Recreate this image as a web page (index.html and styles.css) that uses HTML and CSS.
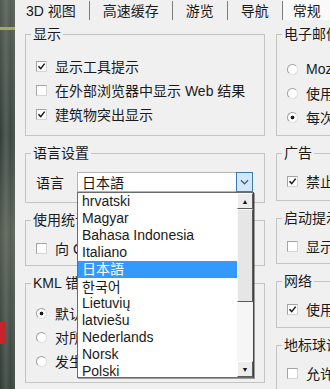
FILE: index.html
```html
<!DOCTYPE html>
<html lang="zh-CN">
  <head>
    <meta charset="UTF-8" />
    <title>选项</title>
    <link rel="stylesheet" href="styles.css">
  </head>
  <body>
    <div class="screen">
      <div class="map"></div>
      <div class="dialog">
        <div class="tabs">
          <div class="tab">3D 视图</div>
          <div class="tab">高速缓存</div>
          <div class="tab">游览</div>
          <div class="tab">导航</div>
          <div class="tab active">常规</div>
        </div>

        <div class="panel">
          <div class="col">
            <fieldset class="group g-display">
              <legend>显示</legend>
              <label class="row"><span class="check"><svg viewBox="0 0 9 9"><path d="M1.5 4.2l2.2 2.4 4-5" /></svg></span>显示工具提示</label>
              <label class="row"><span class="check"></span>在外部浏览器中显示 Web 结果</label>
              <label class="row"><span class="check"><svg viewBox="0 0 9 9"><path d="M1.5 4.2l2.2 2.4 4-5" /></svg></span>建筑物突出显示</label>
            </fieldset>

            <fieldset class="group g-lang">
              <legend>语言设置</legend>
              <div class="row lang-row">
                <span>语言</span>
                <div class="select">
                  <span class="select-value">日本語</span>
                  <span class="select-btn">
                    <svg viewBox="0 0 10 6"><path d="M1 1l4 4 4-4" /></svg>
                  </span>
                  <div class="dropdown">
                    <ul class="options">
                      <li>hrvatski</li>
                      <li>Magyar</li>
                      <li>Bahasa Indonesia</li>
                      <li>Italiano</li>
                      <li class="selected">日本語</li>
                      <li lang="ko">한국어</li>
                      <li>Lietuvių</li>
                      <li>latviešu</li>
                      <li>Nederlands</li>
                      <li>Norsk</li>
                      <li>Polski</li>
                    </ul>
                    <div class="scrollbar">
                      <span class="sb-btn">&#9650;</span>
                      <span class="sb-thumb"></span>
                      <span class="sb-track"></span>
                      <span class="sb-btn">&#9660;</span>
                    </div>
                  </div>
                </div>
              </div>
            </fieldset>

            <fieldset class="group g-stats">
              <legend>使用统计信息</legend>
              <label class="row"><span class="check"></span>向 Google 发送使用统计信息</label>
            </fieldset>

            <fieldset class="group g-kml">
              <legend>KML 错误处理</legend>
              <label class="row"><span class="radio on"></span>默认行为</label>
              <label class="row"><span class="radio"></span>对所有错误静默处理</label>
              <label class="row"><span class="radio"></span>发生错误时提示</label>
            </fieldset>
          </div>

          <div class="col">
            <fieldset class="group g-mail">
              <legend>电子邮件程序</legend>
              <label class="row"><span class="radio"></span>Mozilla Thunderbird</label>
              <label class="row"><span class="radio"></span>使用 Gmail 帐户</label>
              <label class="row"><span class="radio on"></span>每次询问</label>
            </fieldset>

            <fieldset class="group g-ads">
              <legend>广告</legend>
              <label class="row"><span class="check"><svg viewBox="0 0 9 9"><path d="M1.5 4.2l2.2 2.4 4-5" /></svg></span>禁止广告</label>
            </fieldset>

            <fieldset class="group">
              <legend>启动提示</legend>
              <label class="row"><span class="check"></span>显示启动提示</label>
            </fieldset>

            <fieldset class="group g-net">
              <legend>网络</legend>
              <label class="row"><span class="check"><svg viewBox="0 0 9 9"><path d="M1.5 4.2l2.2 2.4 4-5" /></svg></span>使用代理服务器</label>
            </fieldset>

            <fieldset class="group">
              <legend>地标球设置</legend>
              <label class="row"><span class="check"></span>允许访问地标球</label>
            </fieldset>
          </div>
        </div>
      </div>
    </div>
  </body>
</html>
```

FILE: styles.css
```css
* {
  box-sizing: border-box;
}
body {
  margin: 0;
  width: 330px;
  height: 389px;
  overflow: hidden;
  font-family: "Liberation Sans", "Noto Sans CJK SC", sans-serif;
  font-size: 14px;
  color: #1a1a1a;
  background: #f0f0f0;
}
.screen {
  display: flex;
  height: 389px;
}

/* strip of the map window behind the dialog */
.map {
  flex: 0 0 15px;
  background:
    linear-gradient(180deg, transparent 27px, #a9a65a 27px, #a9a65a 30px, transparent 30px),
    linear-gradient(180deg, transparent 322px, #c8232a 322px, #c8232a 344px, transparent 344px) 0 0 / 6px 100% no-repeat,
    linear-gradient(180deg, rgba(110, 116, 104, 0.5), rgba(40, 52, 46, 0.2) 35%, rgba(120, 122, 108, 0.45) 60%, rgba(40, 50, 44, 0.3)),
    linear-gradient(90deg, #34403b, #5e6862 40%, #414d47 70%, #55615a);
}

.dialog {
  flex: 0 0 560px;
}
.tabs {
  display: flex;
  height: 20px;
}
.tab {
  height: 19px;
  margin-top: 1px;
  padding: 2px 13px 0;
  line-height: 16px;
  border-right: 1px solid #7d7d7d;
  white-space: nowrap;
}
.tab:first-child {
  padding-left: 11px;
}
.tab.active {
  margin-top: 0;
  height: 20px;
  padding: 3px 11px 0 10px;
  background: #f9f9f9;
}

.panel {
  display: flex;
  gap: 11px;
  padding: 6px 0 0 10px;
}
.col {
  display: flex;
  flex-direction: column;
  gap: 9px;
  width: 240px;
}

.group {
  margin: 0;
  min-width: 0;
  padding: 8px 10px 5px;
  border: 1px solid #c4c4c4;
}
.group legend {
  margin-left: -5px;
  padding: 0 2px;
  line-height: 16px;
  white-space: nowrap;
}
.g-display {
  padding-top: 12px;
  padding-bottom: 9px;
}
.g-lang {
  padding-top: 11px;
  padding-bottom: 10px;
}
.g-kml {
  padding-top: 10px;
  padding-bottom: 9px;
}
.g-mail {
  padding-top: 15px;
  padding-bottom: 6px;
}
.g-ads {
  padding-bottom: 7px;
}
.g-net {
  padding-bottom: 6px;
}

.row {
  display: flex;
  align-items: center;
  gap: 8px;
  height: 24px;
  white-space: nowrap;
}
.check {
  flex: none;
  display: flex;
  align-items: center;
  justify-content: center;
  width: 11px;
  height: 11px;
  border: 1px solid #a4a4a4;
  border-right-color: #d4d4d4;
  border-bottom-color: #d4d4d4;
  background: #fff;
}
.check svg {
  width: 9px;
  height: 9px;
  fill: none;
  stroke: #1a1a1a;
  stroke-width: 1.5;
}
.radio {
  flex: none;
  width: 11px;
  height: 11px;
  border-radius: 50%;
  border: 1px solid #a0a0a0;
  border-right-color: #e0e0e0;
  border-bottom-color: #e0e0e0;
  background: #fff;
}
.radio.on {
  background: radial-gradient(circle, #1a1a1a 0 1.6px, #fff 2.2px);
}

/* language combo box */
.lang-row {
  gap: 13px;
  height: 20px;
}
.select {
  position: relative;
  display: flex;
  width: 176px;
  height: 20px;
  border: 1px solid #b4b4b4;
  background: #fff;
}
.select-value {
  flex: 1;
  padding-left: 4px;
  line-height: 18px;
  font-family: "Noto Sans CJK JP", sans-serif;
  font-size: 14px;
}
.select-btn {
  display: flex;
  align-items: center;
  justify-content: center;
  width: 17px;
  margin: -1px -1px -1px 0;
  border: 1px solid #3d7bad;
  background: #d3e7fa;
}
.select-btn svg {
  width: 9px;
  height: 6px;
  fill: none;
  stroke: #4a5f80;
  stroke-width: 1.4;
}

.dropdown {
  position: absolute;
  z-index: 5;
  left: -1px;
  top: 19px;
  display: flex;
  width: 177px;
  height: 186px;
  border: 1px solid #6b6b6b;
  border-right-color: #404040;
  background: #fff;
  box-shadow: 1px 1px 0 rgba(0, 0, 0, 0.35);
}
.options {
  flex: 1;
  margin: 0;
  padding: 0;
  list-style: none;
  overflow: hidden;
}
.options li {
  height: 17px;
  padding-left: 4px;
  line-height: 17px;
  font-size: 14px;
  font-family: "Liberation Sans", "Noto Sans CJK JP", sans-serif;
  white-space: nowrap;
}
.options li[lang="ko"] {
  font-family: "Noto Sans CJK KR", sans-serif;
}
.options .selected {
  background: #3399ff;
  color: #fff;
}
.scrollbar {
  display: flex;
  flex-direction: column;
  width: 16px;
  background: #f6f6f6;
}
.sb-btn {
  display: flex;
  align-items: center;
  justify-content: center;
  height: 16px;
  font-size: 7px;
  color: #111;
  background: #ececec;
  border: 1px solid #fff;
  border-right-color: #5c5c5c;
  border-bottom-color: #5c5c5c;
}
.sb-thumb {
  height: 93px;
  background: #e6e6e6;
  border: 1px solid #fafafa;
  border-right-color: #5c5c5c;
  border-bottom-color: #5c5c5c;
}
.sb-track {
  flex: 1;
}
```
